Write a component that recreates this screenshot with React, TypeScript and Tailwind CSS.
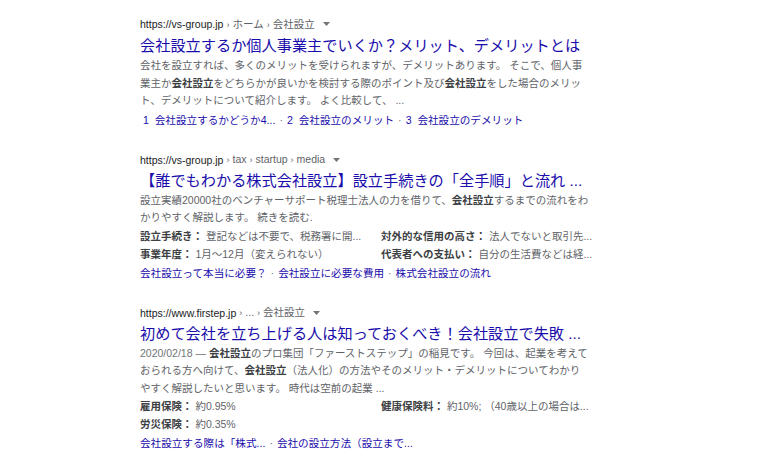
import type { ReactNode } from "react";

const FONT = "font-['Liberation_Sans','Noto_Sans_CJK_JP',sans-serif]";

function Caret() {
  return (
    <svg width="7" height="4" viewBox="0 0 7 4" className="ml-[8px] inline-block align-middle">
      <polygon points="0,0 7,0 3.5,4" fill="#70757a" />
    </svg>
  );
}

function Cite({ domain, crumbs }: { domain: string; crumbs: string[] }) {
  return (
    <div className="flex items-center h-[20px] text-[10.5px] leading-[20px] whitespace-nowrap">
      <span className="text-[#202124]">{domain}</span>
      <span className="text-[#5f6368]">
        {crumbs.map((c) => (
          <span key={c}>
            <span className="px-[3px] text-[9px]">›</span>
            {c}
          </span>
        ))}
      </span>
      <Caret />
    </div>
  );
}

function Title({ children }: { children: ReactNode }) {
  return (
    <div className="text-[15.2px] leading-[21px] text-[#1a0dab] whitespace-nowrap">{children}</div>
  );
}

function Snippet({ lines }: { lines: ReactNode[] }) {
  return (
    <div className="mt-[1px] text-[10.5px] leading-[17.5px] text-[#5f6368] whitespace-nowrap">
      {lines.map((l, i) => (
        <div key={i}>{l}</div>
      ))}
    </div>
  );
}

function B({ children }: { children: ReactNode }) {
  return <b className="font-bold text-[#3c4043]">{children}</b>;
}

function Facts({ rows }: { rows: [string, string][] }) {
  return (
    <div className="grid grid-cols-[241px_215px] text-[10.5px] leading-[18px] text-[#5f6368] whitespace-nowrap">
      {rows.map(([k, v], i) =>
        k ? (
          <div key={i}>
            <B>{k}：</B> {v}
          </div>
        ) : (
          <div key={i} />
        )
      )}
    </div>
  );
}

function Links({ items }: { items: string[] }) {
  return (
    <div className="text-[10.6px] leading-[20px] text-[#1a0dab] whitespace-nowrap">
      {items.map((t, i) => (
        <span key={t}>
          {i > 0 && <span className="px-[4px] text-[#70757a]">·</span>}
          {t}
        </span>
      ))}
    </div>
  );
}

export default function App() {
  return (
    <div className={`w-[765px] h-[468px] bg-white overflow-hidden pl-[140px] pt-[14px] ${FONT}`}>
      <div className="w-[460px] flex flex-col gap-[20px]">
        <div>
          <Cite domain="https://vs-group.jp" crumbs={["ホーム", "会社設立"]} />
          <div className="pt-[1px]">
            <Title>会社設立するか個人事業主でいくか？メリット、デメリットとは</Title>
          </div>
          <Snippet
            lines={[
              <>会社を設立すれば、多くのメリットを受けられますが、デメリットあります。 そこで、個人事</>,
              <>
                業主か<B>会社設立</B>をどちらかが良いかを検討する際のポイント及び<B>会社設立</B>をした場合のメリッ
              </>,
              <>ト、デメリットについて紹介します。 よく比較して、 ...</>,
            ]}
          />
          <div className="pl-[3px]">
            <Links
              items={[
                "1\u00a0\u00a0会社設立するかどうか4...",
                "2\u00a0\u00a0会社設立のメリット",
                "3\u00a0\u00a0会社設立のデメリット",
              ]}
            />
          </div>
        </div>

        <div>
          <Cite domain="https://vs-group.jp" crumbs={["tax", "startup", "media"]} />
          <Title>【誰でもわかる株式会社設立】設立手続きの「全手順」と流れ ...</Title>
          <Snippet
            lines={[
              <>
                設立実績20000社のベンチャーサポート税理士法人の力を借りて、<B>会社設立</B>するまでの流れをわ
              </>,
              <>かりやすく解説します。 続きを読む.</>,
            ]}
          />
          <Facts
            rows={[
              ["設立手続き", "登記などは不要で、税務署に開..."],
              ["対外的な信用の高さ", "法人でないと取引先..."],
              ["事業年度", "1月～12月（変えられない）"],
              ["代表者への支払い", "自分の生活費などは経..."],
            ]}
          />
          <Links items={["会社設立って本当に必要？", "会社設立に必要な費用", "株式会社設立の流れ"]} />
        </div>

        <div>
          <Cite domain="https://www.firstep.jp" crumbs={["...", "会社設立"]} />
          <Title>初めて会社を立ち上げる人は知っておくべき！会社設立で失敗 ...</Title>
          <Snippet
            lines={[
              <>
                <span className="text-[#70757a]">2020/02/18 — </span>
                <B>会社設立</B>のプロ集団「ファーストステップ」の稲見です。 今回は、起業を考えて
              </>,
              <>
                おられる方へ向けて、<B>会社設立</B>（法人化）の方法やそのメリット・デメリットについてわかり
              </>,
              <>やすく解説したいと思います。 時代は空前の起業 ...</>,
            ]}
          />
          <Facts
            rows={[
              ["雇用保険", "約0.95%"],
              ["健康保険料", "約10%; （40歳以上の場合は..."],
              ["労災保険", "約0.35%"],
              ["", ""],
            ]}
          />
          <Links items={["会社設立する際は「株式...", "会社の設立方法（設立まで..."]} />
        </div>
      </div>
    </div>
  );
}
